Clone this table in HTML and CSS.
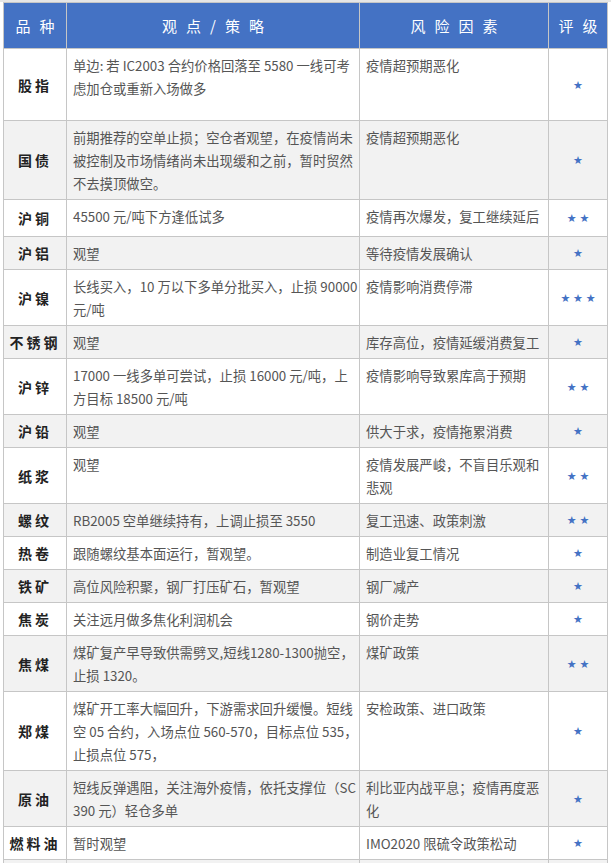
FILE: index.html
```html
<!DOCTYPE html>
<html lang="zh-CN">
<head>
<meta charset="utf-8">
<title>策略表</title>
<link rel="stylesheet" href="styles.css">
</head>
<body>
<div class="topband"></div>
<table class="strategy">
  <colgroup>
    <col class="c-name"><col class="c-view"><col class="c-risk"><col class="c-rate">
  </colgroup>
  <thead>
    <tr>
      <th class="h-name">品种</th>
      <th class="h-view">观点/策略</th>
      <th class="h-risk">风险因素</th>
      <th class="h-rate">评级</th>
    </tr>
  </thead>
  <tbody>
    <tr class="tall">
      <td class="name">股指</td>
      <td class="text">单边: 若 IC2003 合约价格回落至 5580 一线可考<br>虑加仓或重新入场做多</td>
      <td class="text">疫情超预期恶化</td>
      <td class="rate"><span class="stars">★</span></td>
    </tr>
    <tr class="alt">
      <td class="name">国债</td>
      <td class="text">前期推荐的空单止损；空仓者观望，在疫情尚未<br>被控制及市场情绪尚未出现缓和之前，暂时贸然<br>不去摸顶做空。</td>
      <td class="text">疫情超预期恶化</td>
      <td class="rate"><span class="stars">★</span></td>
    </tr>
    <tr class="extra">
      <td class="name">沪铜</td>
      <td class="text">45500 元/吨下方逢低试多</td>
      <td class="text">疫情再次爆发，复工继续延后</td>
      <td class="rate"><span class="stars">★★</span></td>
    </tr>
    <tr class="alt">
      <td class="name">沪铝</td>
      <td class="text">观望</td>
      <td class="text">等待疫情发展确认</td>
      <td class="rate"><span class="stars">★</span></td>
    </tr>
    <tr>
      <td class="name">沪镍</td>
      <td class="text">长线买入，10 万以下多单分批买入，止损 90000<br>元/吨</td>
      <td class="text">疫情影响消费停滞</td>
      <td class="rate"><span class="stars">★★★</span></td>
    </tr>
    <tr class="alt">
      <td class="name">不锈钢</td>
      <td class="text">观望</td>
      <td class="text">库存高位，疫情延缓消费复工</td>
      <td class="rate"><span class="stars">★</span></td>
    </tr>
    <tr>
      <td class="name">沪锌</td>
      <td class="text">17000 一线多单可尝试，止损 16000 元/吨，上<br>方目标 18500 元/吨</td>
      <td class="text">疫情影响导致累库高于预期</td>
      <td class="rate"><span class="stars">★★</span></td>
    </tr>
    <tr class="alt">
      <td class="name">沪铅</td>
      <td class="text">观望</td>
      <td class="text">供大于求，疫情拖累消费</td>
      <td class="rate"><span class="stars">★</span></td>
    </tr>
    <tr>
      <td class="name">纸浆</td>
      <td class="text">观望</td>
      <td class="text">疫情发展严峻，不盲目乐观和<br>悲观</td>
      <td class="rate"><span class="stars">★★</span></td>
    </tr>
    <tr class="alt">
      <td class="name">螺纹</td>
      <td class="text">RB2005 空单继续持有，上调止损至 3550</td>
      <td class="text">复工迅速、政策刺激</td>
      <td class="rate"><span class="stars">★★</span></td>
    </tr>
    <tr>
      <td class="name">热卷</td>
      <td class="text">跟随螺纹基本面运行，暂观望。</td>
      <td class="text">制造业复工情况</td>
      <td class="rate"><span class="stars">★</span></td>
    </tr>
    <tr class="alt">
      <td class="name">铁矿</td>
      <td class="text">高位风险积聚，钢厂打压矿石，暂观望</td>
      <td class="text">钢厂减产</td>
      <td class="rate"><span class="stars">★</span></td>
    </tr>
    <tr>
      <td class="name">焦炭</td>
      <td class="text">关注远月做多焦化利润机会</td>
      <td class="text">钢价走势</td>
      <td class="rate"><span class="stars">★</span></td>
    </tr>
    <tr class="alt">
      <td class="name">焦煤</td>
      <td class="text">煤矿复产早导致供需劈叉,短线1280-1300抛空，<br>止损 1320。</td>
      <td class="text">煤矿政策</td>
      <td class="rate"><span class="stars">★★</span></td>
    </tr>
    <tr>
      <td class="name">郑煤</td>
      <td class="text">煤矿开工率大幅回升，下游需求回升缓慢。短线<br>空 05 合约，入场点位 560-570，目标点位 535，<br>止损点位 575，</td>
      <td class="text">安检政策、进口政策</td>
      <td class="rate"><span class="stars">★</span></td>
    </tr>
    <tr class="alt">
      <td class="name">原油</td>
      <td class="text">短线反弹遇阻，关注海外疫情，依托支撑位（SC<br>390 元）轻仓多单</td>
      <td class="text">利比亚内战平息；疫情再度恶<br>化</td>
      <td class="rate"><span class="stars">★</span></td>
    </tr>
    <tr>
      <td class="name">燃料油</td>
      <td class="text">暂时观望</td>
      <td class="text">IMO2020 限硫令政策松动</td>
      <td class="rate"><span class="stars">★</span></td>
    </tr>
    <tr class="alt filler">
      <td class="name"></td>
      <td class="text"></td>
      <td class="text"></td>
      <td class="rate"></td>
    </tr>
  </tbody>
</table>
</body>
</html>
```
FILE: styles.css
```css
html, body {
  margin: 0;
  padding: 0;
  background: #ffffff;
}
body {
  font-family: "Noto Sans CJK SC", "Noto Sans", sans-serif;
  font-size: 13.33px;
  color: #555555;
}
.topband {
  height: 2px;
  background: #e6e6e6;
}
.strategy {
  margin-left: 3px;
  border-collapse: collapse;
  table-layout: fixed;
  width: 604px;
}
.c-name { width: 63px; }
.c-view { width: 293px; }
.c-risk { width: 189px; }
.c-rate { width: 59px; }

.strategy th,
.strategy td {
  border: 1px solid #c6c6c6;
  line-height: 23px;
}
.strategy th {
  background: #4472c4;
  color: #ffffff;
  font-weight: normal;
  font-size: 15px;
  letter-spacing: 9px;
  text-indent: 9px;
  padding: 11px 0;
  text-align: center;
  white-space: nowrap;
}
.h-view { letter-spacing: 8.5px; }
.strategy td {
  padding: 5px 3px 4px 6px;
  vertical-align: top;
  white-space: nowrap;
}
.strategy td.name {
  padding: 0;
  text-align: center;
  vertical-align: middle;
  font-weight: bold;
  font-size: 14px;
  line-height: 16px;
  color: #222222;
  letter-spacing: 3px;
}
.strategy td.rate {
  padding: 0;
  text-align: center;
  vertical-align: middle;
  font-family: "DejaVu Sans", sans-serif;
  font-size: 11px;
  line-height: 12px;
}
.stars {
  display: inline-block;
  vertical-align: middle;
  color: #4472c4;
  letter-spacing: 2.8px;
  padding-left: 2.8px;
  padding-top: 2px;
}
.alt td {
  background: #f2f2f2;
}
.tall td.text {
  padding-bottom: 20px;
}
.extra td.text {
  padding-bottom: 8px;
}
.filler td {
  height: 23px;
}
```
